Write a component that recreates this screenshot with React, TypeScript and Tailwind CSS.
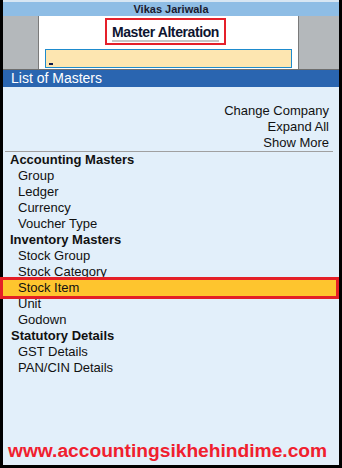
import React from "react";

const font = { fontFamily: '"Liberation Sans", Arial, sans-serif' };

const Row = ({ children, bold = false, indent = false }: { children: React.ReactNode; bold?: boolean; indent?: boolean }) => (
  <div
    className={`h-[16px] leading-[16px] text-[13px] text-[#111] ${bold ? "font-bold pl-[7px]" : indent ? "pl-[15px]" : ""}`}
  >
    {children}
  </div>
);

export default function App() {
  return (
    <div style={font} className="w-[342px] h-[468px] bg-black px-[3px] pb-[3px] flex flex-col overflow-hidden">
      {/* Title bar */}
      <div className="h-[16px] shrink-0 bg-[#8ebde5] border-t-[2px] border-[#d7e6f3] text-center text-[11px] leading-[14px] font-bold text-[#1a1a2e]">
        Vikas Jariwala
      </div>
      {/* Header area */}
      <div className="h-[54px] shrink-0 flex border-b border-[#6e6e6e]">
        <div className="w-[36px] bg-[#b4b8bb] border-r border-[#7a7a7a]" />
        <div className="w-[260px] bg-white flex flex-col items-center border-r border-[#7a7a7a]">
          <div className="mt-[2px] ml-[-6px] border-2 border-[#e5202a] h-[27px] px-[5px] flex items-start">
            <span className="text-[14px] font-bold tracking-[-0.4px] leading-[16px] mt-[4px] text-[#0e1530] border-b-[2px] border-[#c6c6c6]">
              Master Alteration
            </span>
          </div>
          <div className="mt-[4px] w-[247px] h-[19px] bg-[#fde6b1] border border-[#1e8bcd] relative">
            <div className="absolute left-[3px] top-[13px] w-[4px] h-[2px] bg-[#0d1a4a]" />
          </div>
        </div>
        <div className="flex-1 bg-[#b4b8bb]" />
      </div>
      {/* Band */}
      <div className="h-[17px] shrink-0 bg-[#2a65b0] text-white text-[14px] leading-[17px] pl-[8px]">
        List of Masters
      </div>
      {/* Content */}
      <div className="flex-1 bg-[#e2effa] flex flex-col">
        <div className="pt-[16px] pr-[10px] flex flex-col items-end text-[13px] text-[#111]">
          <div className="h-[16px] leading-[16px]">Change Company</div>
          <div className="h-[16px] leading-[16px]">Expand All</div>
          <div className="h-[16px] leading-[16px]">Show More</div>
        </div>
        <div className="h-px bg-[#a0a0a0] ml-[2px] mr-[6px]" />
        <Row bold>Accounting Masters</Row>
        <Row indent>Group</Row>
        <Row indent>Ledger</Row>
        <Row indent>Currency</Row>
        <Row indent>Voucher Type</Row>
        <Row bold>Inventory Masters</Row>
        <Row indent>Stock Group</Row>
        <Row indent>Stock Category</Row>
        <div className="h-[16px] leading-[16px] text-[13px] text-[#111] pl-[15px] mr-[3px] bg-[#fec52e] outline outline-[3px] outline-[#e41f26]">
          Stock Item
        </div>
        <Row indent>Unit</Row>
        <Row indent>Godown</Row>
        <div className="h-[16px] leading-[16px] text-[13px] text-[#111] font-bold pl-[8px]">Statutory Details</div>
        <Row indent>GST Details</Row>
        <Row indent>PAN/CIN Details</Row>
        <div className="flex-1" />
        <div className="h-[22px] leading-[22px] pl-[5px] mb-[3px] text-[19.2px] font-bold text-[#f0202e]">
          www.accountingsikhehindime.com
        </div>
      </div>
    </div>
  );
}
